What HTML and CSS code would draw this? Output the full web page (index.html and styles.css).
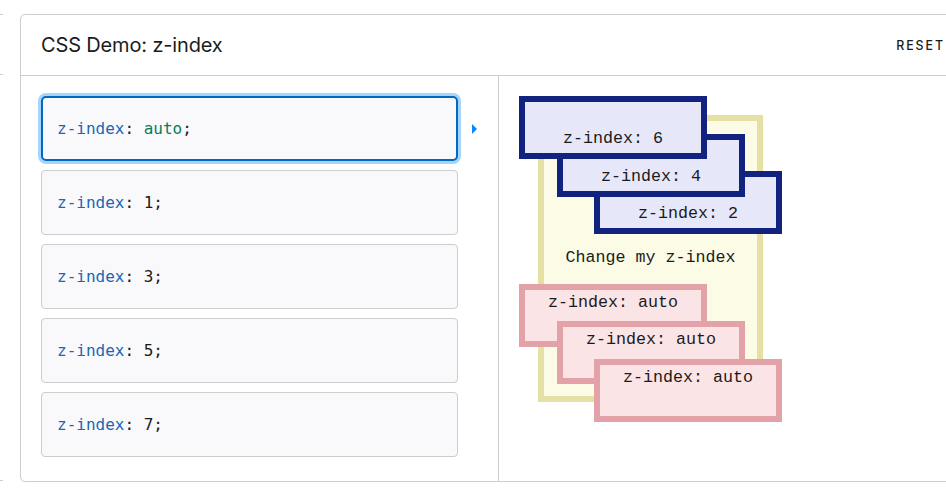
FILE: index.html
```html
<!DOCTYPE html>
<html lang="en">
<head>
<meta charset="utf-8">
<title>CSS Demo: z-index</title>
<link rel="stylesheet" href="styles.css">
</head>
<body>
<div class="page">
  <div class="stub"><div class="stub-head"></div><div class="stub-body"></div></div>
  <section class="card">
    <header class="card-head">
      <h1 class="title">CSS Demo: z-index</h1>
      <button class="reset" type="button">RESET</button>
    </header>
    <div class="card-body">
      <div class="choices">
        <div class="row">
          <div class="choice selected"><code><span class="prop">z-index</span>: <span class="kw">auto</span>;</code></div>
          <span class="arrow"></span>
        </div>
        <div class="row">
          <div class="choice"><code><span class="prop">z-index</span>: 1;</code></div>
        </div>
        <div class="row">
          <div class="choice"><code><span class="prop">z-index</span>: 3;</code></div>
        </div>
        <div class="row">
          <div class="choice"><code><span class="prop">z-index</span>: 5;</code></div>
        </div>
        <div class="row">
          <div class="choice"><code><span class="prop">z-index</span>: 7;</code></div>
        </div>
      </div>
      <div class="output">
        <div class="box blue b1">z-index: 6</div>
        <div class="yellow">Change my z-index</div>
        <div class="box blue b2">z-index: 4</div>
        <div class="box blue b3">z-index: 2</div>
        <div class="box pink p1">z-index: auto</div>
        <div class="box pink p2">z-index: auto</div>
        <div class="box pink p3">z-index: auto</div>
      </div>
    </div>
  </section>
</div>
</body>
</html>
```

FILE: styles.css
```css
html, body {
  margin: 0;
  padding: 0;
  background: #ffffff;
  overflow: hidden;
  width: 946px;
  height: 500px;
}

.page {
  display: flex;
  align-items: flex-start;
  padding-top: 14px;
  gap: 17px;
  font-family: Inter, "Noto Sans", sans-serif;
  color: #1b1b1b;
}

.stub {
  width: 3px;
  flex: none;
}
.stub-head {
  height: 59px;
  border-top: 1px solid #cdcdcd;
  border-bottom: 1px solid #cdcdcd;
}
.stub-body {
  height: 405px;
  border-bottom: 1px solid #cdcdcd;
}

.card {
  flex: none;
  width: 944px;
  border: 1px solid #cdcdcd;
  border-radius: 5px;
  background: #fff;
}

.card-head {
  height: 60px;
  display: flex;
  align-items: center;
  justify-content: space-between;
  padding: 0 22px 0 20px;
  border-bottom: 1px solid #cdcdcd;
}

.title {
  margin: 0;
  font-size: 20px;
  font-weight: 400;
  letter-spacing: -0.15px;
  color: #1b1b1b;
}

.reset {
  border: 0;
  background: none;
  padding: 0;
  font-family: Inter, sans-serif;
  font-size: 12.4px;
  font-weight: 500;
  letter-spacing: 1.9px;
  color: #1b1b1b;
  margin-right: -1.9px;
  margin-top: 1px;
}

.card-body {
  display: flex;
  height: 405px;
}

.choices {
  width: 457px;
  flex: none;
  padding: 20px 0 0 20px;
  border-right: 1px solid #cdcdcd;
  display: flex;
  flex-direction: column;
  gap: 9px;
}

.row {
  display: flex;
  align-items: center;
}

.choice {
  width: 400px;
  height: 63px;
  border: 1px solid #cdcdcd;
  border-radius: 4px;
  background: #f9f9fb;
  display: flex;
  align-items: center;
  padding-left: 15px;
  box-sizing: content-box;
}

.choice.selected {
  border: 2px solid #0069c2;
  box-shadow: 0 0 0 3px #a7d4fb;
  height: 61px;
  width: 399px;
  padding-left: 14px;
  border-radius: 5px;
}

code {
  font-family: "DejaVu Sans Mono", "Liberation Mono", monospace;
  font-size: 16px;
  color: #1b1b1b;
}
.prop { color: #1a67b7; }
.kw { color: #067d5a; }

.arrow {
  margin-left: 14px;
  width: 0;
  height: 0;
  border-top: 5px solid transparent;
  border-bottom: 5px solid transparent;
  border-left: 5px solid #0a84ff;
}

.output {
  position: relative;
  flex: 1;
}

.box, .yellow {
  position: absolute;
  box-sizing: border-box;
  border: 6px solid;
  font-family: "Liberation Mono", "DejaVu Sans Mono", monospace;
  font-size: 16.67px;
  line-height: 20px;
  text-align: center;
  color: #1b1b1b;
}

.box {
  width: 188px;
  height: 63px;
}

.blue {
  background: #e6e8fa;
  border-color: #12237f;
  padding-top: 27px;
}
.pink {
  background: #fbe4e6;
  border-color: #e3a1a8;
  padding-top: 3px;
}

.b1 { left: 20px; top: 20px; z-index: 6; }
.b2 { left: 58px; top: 58px; z-index: 4; }
.b3 { left: 95px; top: 95px; z-index: 2; }

.yellow {
  left: 39px;
  top: 39px;
  width: 225px;
  height: 287px;
  background: #fbfbe6;
  border-color: #e5e1a4;
  padding-top: 127px;
  z-index: auto;
}

.p1 { left: 20px; top: 208px; }
.p2 { left: 58px; top: 245px; }
.p3 { left: 95px; top: 283px; }
```
